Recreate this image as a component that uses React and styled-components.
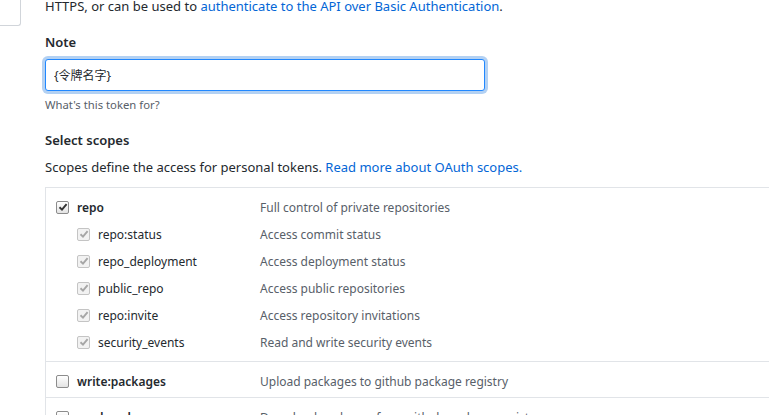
import React from 'react'
import styled, { createGlobalStyle } from 'styled-components'

const GlobalStyle = createGlobalStyle`
  body {
    margin: 0;
    overflow: hidden;
    background: #ffffff;
    color: #24292e;
    font-family: "Noto Sans", "Noto Sans CJK SC", sans-serif;
    font-size: 13px;
  }
`

const Page = styled.div`
  display: flex;
  align-items: flex-start;
`

const Sidebar = styled.div`
  width: 21px;
  flex-shrink: 0;
`

const SidebarBox = styled.div`
  height: 26px;
  border-right: 1px solid #d1d5da;
  border-bottom: 1px solid #d1d5da;
  border-bottom-right-radius: 3px;
  box-sizing: border-box;
`

const Main = styled.div`
  margin-left: 24px;
  width: 740px;
  flex-shrink: 0;
`

const Intro = styled.p`
  margin: -4px 0 0;
  line-height: 20px;
  color: #24292e;
`

const Link = styled.a`
  color: #0366d6;
  text-decoration: none;
`

const Label = styled.div`
  margin-top: ${(p) => p.$top}px;
  font-size: 13px;
  font-weight: 600;
  line-height: 20px;
`

const Input = styled.input`
  display: block;
  margin-top: 7px;
  width: 440px;
  height: 32px;
  box-sizing: border-box;
  padding: 0 8px;
  border: 1px solid #2188ff;
  border-radius: 3px;
  box-shadow: 0 0 0 3px rgba(3, 102, 214, 0.3);
  outline: none;
  font-family: "Noto Sans", "Noto Sans CJK SC", sans-serif;
  font-size: 12px;
  color: #24292e;
`

const Hint = styled.div`
  margin-top: 6px;
  font-size: 11.3px;
  line-height: 16px;
  color: #586069;
`

const Lead = styled.p`
  margin: 7px 0 0;
  line-height: 20px;
`

const ScopeTable = styled.div`
  margin-top: 10px;
  border-left: 1px solid #e1e4e8;
  font-size: 12px;
`

const Group = styled.div`
  border-top: 1px solid #e1e4e8;
  padding: ${(p) => (p.$nested ? '5.5px 0' : '6px 0 2px')};
`

const Row = styled.div`
  display: grid;
  grid-template-columns: 214px 1fr;
  align-items: center;
  height: 27px;
`

const Name = styled.label`
  display: flex;
  align-items: center;
  gap: 8px;
  padding-left: ${(p) => (p.$sub ? 31 : 10)}px;
  font-weight: ${(p) => (p.$sub ? 400 : 600)};
  color: #24292e;
`

const Desc = styled.span`
  color: #586069;
`

const Box = styled.span`
  display: inline-flex;
  align-items: center;
  justify-content: center;
  width: 13px;
  height: 13px;
  box-sizing: border-box;
  border: 1px solid ${(p) => (p.$disabled ? '#c4c4c4' : '#8c8c8c')};
  border-radius: 2px;
  background: ${(p) => (p.$disabled ? '#f2f2f2' : 'linear-gradient(#ffffff, #e3e3e3)')};
  color: ${(p) => (p.$disabled ? '#a6a6a6' : '#333333')};
  flex-shrink: 0;
`

const Check = ({ checked, disabled }) => (
  <Box $disabled={disabled}>
    {checked && (
      <svg width="10" height="10" viewBox="0 0 10 10">
        <path d="M1.5 5.2 L4 7.6 L8.6 2.2" fill="none" stroke="currentColor" strokeWidth="1.9" />
      </svg>
    )}
  </Box>
)

const scopes = [
  {
    name: 'repo',
    desc: 'Full control of private repositories',
    checked: true,
    children: [
      ['repo:status', 'Access commit status'],
      ['repo_deployment', 'Access deployment status'],
      ['public_repo', 'Access public repositories'],
      ['repo:invite', 'Access repository invitations'],
      ['security_events', 'Read and write security events'],
    ],
  },
  { name: 'write:packages', desc: 'Upload packages to github package registry', children: [] },
  { name: 'read:packages', desc: 'Download packages from github package registry', children: [] },
]

const App = () => {
  return (
    <>
      <GlobalStyle />
      <Page>
        <Sidebar>
          <SidebarBox />
        </Sidebar>
        <Main>
          <Intro>
            HTTPS, or can be used to <Link>authenticate to the API over Basic Authentication</Link>.
          </Intro>
          <Label $top={16}>Note</Label>
          <Input defaultValue="{令牌名字}" />
          <Hint>What's this token for?</Hint>
          <Label $top={17}>Select scopes</Label>
          <Lead>
            Scopes define the access for personal tokens. <Link>Read more about OAuth scopes.</Link>
          </Lead>
          <ScopeTable>
            {scopes.map((s) => (
              <Group key={s.name} $nested={s.children.length > 0}>
                <Row>
                  <Name>
                    <Check checked={s.checked} />
                    {s.name}
                  </Name>
                  <Desc>{s.desc}</Desc>
                </Row>
                {s.children.map(([n, d]) => (
                  <Row key={n}>
                    <Name $sub>
                      <Check checked disabled />
                      {n}
                    </Name>
                    <Desc>{d}</Desc>
                  </Row>
                ))}
              </Group>
            ))}
          </ScopeTable>
        </Main>
      </Page>
    </>
  )
}

export default App
